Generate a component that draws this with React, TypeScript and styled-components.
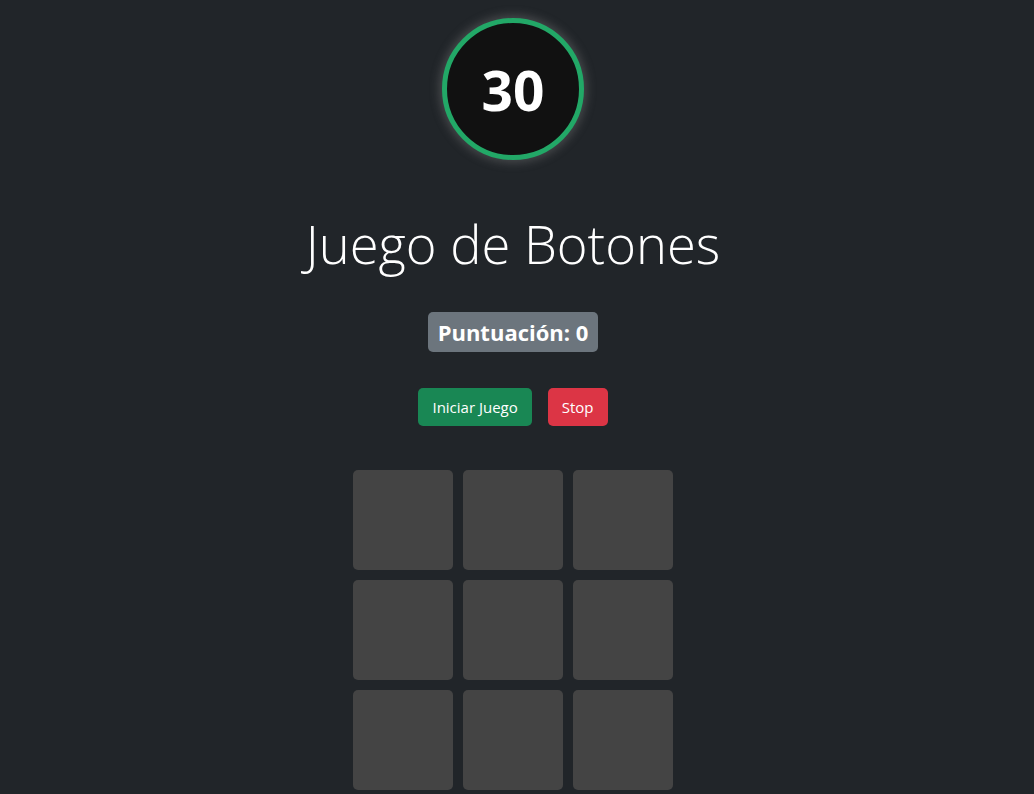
import React from "react";
import styled, { createGlobalStyle } from "styled-components";

const Global = createGlobalStyle`
  html, body { margin: 0; padding: 0; background: #212529; }
  body { font-family: "Open Sans", "Noto Sans", sans-serif; color: #dee2e6; }
`;

const Page = styled.div`
  display: flex;
  flex-direction: column;
  align-items: center;
  padding-top: 18px;
  padding-right: 8px;
  min-height: 794px;
  box-sizing: border-box;
`;

const Timer = styled.div`
  width: 132px;
  height: 132px;
  border-radius: 50%;
  border: 5px solid #22a867;
  background: #111111;
  box-shadow: 0 0 10px 3px rgba(140, 140, 140, 0.35);
  display: flex;
  align-items: center;
  justify-content: center;
  color: #ffffff;
  font-family: "Open Sans", sans-serif;
  font-weight: 700;
  font-size: 55px;
  line-height: 1;
`;

const Title = styled.h1`
  margin: 52px 0 0;
  font-family: "Open Sans", sans-serif;
  font-weight: 300;
  font-size: 52.5px;
  line-height: 1.2;
  color: #ffffff;
`;

const Badge = styled.div`
  margin-top: 37px;
  background: #6c757d;
  color: #fff;
  border-radius: 5px;
  padding: 5px 10px;
  font-family: "Open Sans", sans-serif;
  font-weight: 700;
  font-size: 22px;
  line-height: 30px;
`;

const Actions = styled.div`
  margin-top: 36px;
  display: flex;
  gap: 16px;
`;

const Button = styled.button<{ $variant: "success" | "danger" }>`
  border: none;
  border-radius: 5px;
  height: 38px;
  padding: 0 14px;
  font-family: "Open Sans", sans-serif;
  font-size: 15px;
  color: #fff;
  background: ${(p) => (p.$variant === "success" ? "#198754" : "#dc3545")};
  cursor: pointer;
`;

const Grid = styled.div`
  margin-top: 44px;
  display: grid;
  grid-template-columns: repeat(3, 100px);
  grid-auto-rows: 100px;
  gap: 10px;
`;

const Cell = styled.div`
  background: #444444;
  border-radius: 5px;
`;

export default function App() {
  return (
    <>
      <Global />
      <Page>
        <Timer>30</Timer>
        <Title>Juego de Botones</Title>
        <Badge>Puntuación: 0</Badge>
        <Actions>
          <Button $variant="success">Iniciar Juego</Button>
          <Button $variant="danger">Stop</Button>
        </Actions>
        <Grid>
          {Array.from({ length: 9 }).map((_, i) => (
            <Cell key={i} />
          ))}
        </Grid>
      </Page>
    </>
  );
}
